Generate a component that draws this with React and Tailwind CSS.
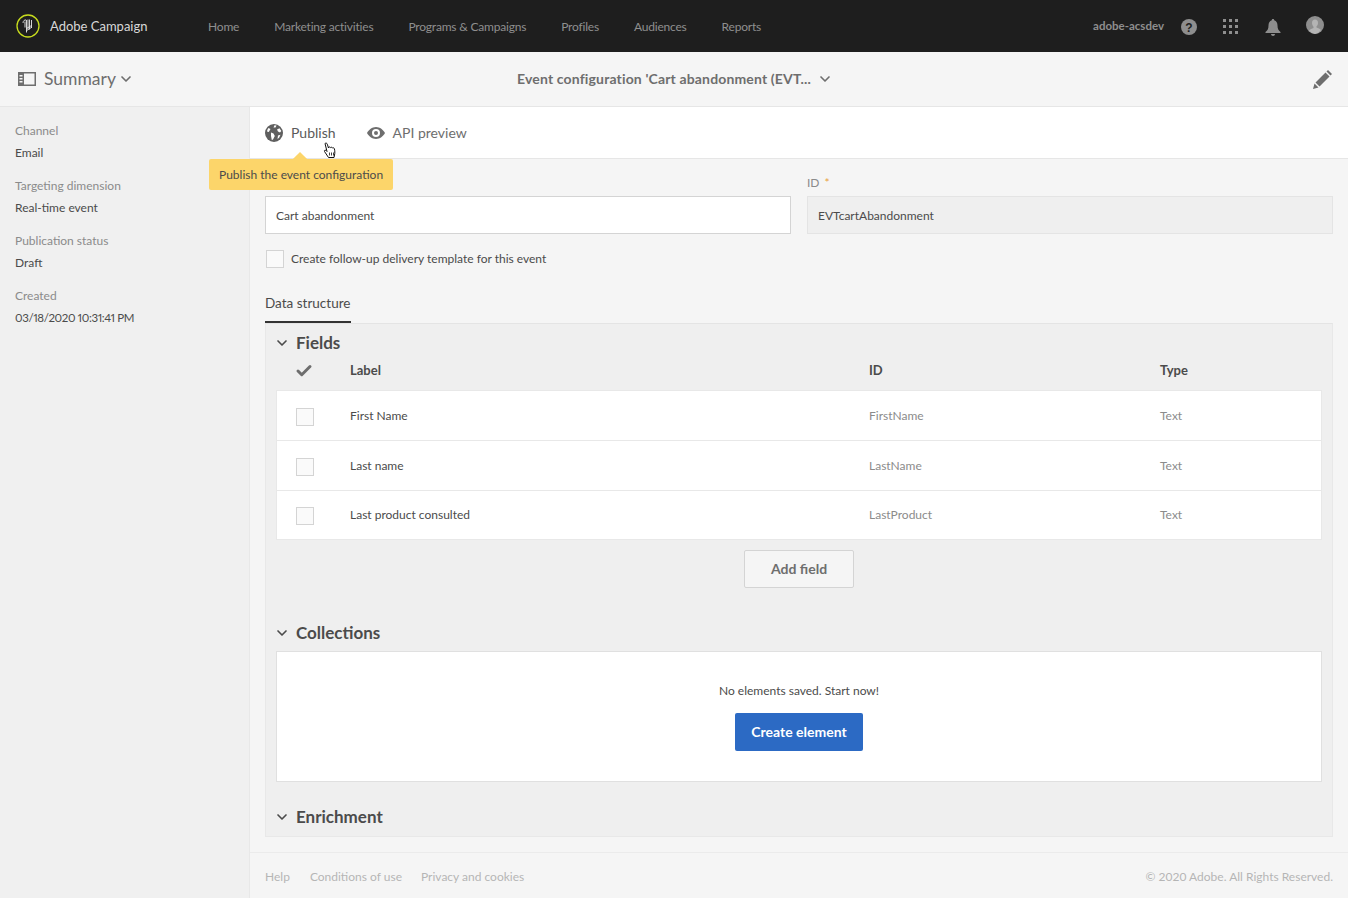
import React from "react";
import { ChevronDown, Check } from "lucide-react";

const font = "font-['Lato','Noto_Sans',sans-serif]";

const Logo = () => (
  <svg width="24" height="24" viewBox="0 0 24 24" fill="none">
    <circle cx="12" cy="12" r="11" stroke="#c8dc1e" strokeWidth="1.3" />
    <path d="M7 9c0-2 1.500-3.500 3.200-3M9 7.500v6M10.500 6v12.500M12 5.500v10M13.500 5.500v10M15.500 6v8M10 17l6-4M10.500 14.500l5-3" stroke="#e8e8e8" strokeWidth="0.9" />
  </svg>
);

const SummaryIcon = () => (
  <svg width="18" height="14" viewBox="0 0 18 14" className="text-[#6e6e6e]">
    <path fill="currentColor" d="M0 0h18v14H0zM6 1.500v11h10.500v-11zM1.500 3v1.500h3V3zM1.500 6v1.500h3V6zM1.500 9v1.500h3V9z" fillRule="evenodd" />
  </svg>
);

const Globe = () => (
  <svg width="18" height="18" viewBox="0 0 18 18">
    <circle cx="9" cy="9" r="9" fill="#5f5f5f" />
    <path fill="#fff" d="M9.500 1.200 11.500 1.500 10.500 3.500 8.500 3.500zM3.500 4 5.500 5 3.800 8 2 7.500C2.200 6 2.800 5 3.500 4zM6 8.500 8.500 9.500 9.800 12 8 15.500 6.800 16 6 12zM12 5.500l2.500-1.200 1.800 2.700-1.300 1.500-2-.9zM13 11.500l2.500-.7-1.400 3-1.600 1.200z" />
  </svg>
);

const Eye = () => (
  <svg width="18" height="12" viewBox="0 0 18 12">
    <path fill="#6e6e6e" fillRule="evenodd" d="M9 0c4 0 7.200 2.800 9 6-1.800 3.200-5 6-9 6S1.800 9.200 0 6c1.800-3.200 5-6 9-6zm0 2a4 4 0 1 0 0 8 4 4 0 0 0 0-8zm0 2a2 2 0 1 1 0 4 2 2 0 0 1 0-4z" />
  </svg>
);

const Pencil = () => (
  <svg width="19" height="19" viewBox="0 0 19 19">
    <path fill="#6e6e6e" d="M0 19l1.500-5.500L5.500 17.500zM2.500 12.500 12.500 2.500 16.500 6.500 6.500 16.500zM13.500 1.500 15 0l4 4-1.500 1.500z" />
  </svg>
);

const Cursor = () => (
  <svg width="16" height="18" viewBox="0 0 16 18">
    <path fill="#fff" stroke="#111" strokeWidth="1" strokeLinejoin="round" d="M3 1.500c1-.8 2-.3 2.300.7L6.500 6l.3-.7c.7-.6 1.400-.4 1.800.3.600-.6 1.500-.4 1.800.4.700-.5 1.700-.2 2 .7.500 2 .6 4.500.1 6.300l-.5 2.500H6.500L2.500 9.500c-.5-1 .5-1.800 1.500-1l1 1z" />
    <path stroke="#111" strokeWidth="0.8" d="M7.500 10.500v3M9.500 10.500v3M11.500 10.500v3" />
  </svg>
);

const HeaderIcons = () => (
  <div className="flex items-center">
    <svg width="16" height="16" viewBox="0 0 16 16" className="ml-[17px] mt-[2px]">
      <circle cx="8" cy="8" r="8" fill="#8e8e8e" />
      <text x="8" y="12.500" textAnchor="middle" fontSize="12" fontWeight="800" fill="#1e1e1e" fontFamily="Liberation Sans">?</text>
    </svg>
    <div className="ml-[26px] grid grid-cols-3 gap-[3px] w-[15px]">
      {[0, 1, 2, 3, 4, 5, 6, 7, 8].map((i) => (
        <span key={i} className="w-[3px] h-[3px] bg-[#8e8e8e]" />
      ))}
    </div>
    <svg width="16" height="17" viewBox="0 0 16 17" className="ml-[27px] mt-[2px]">
      <path fill="#8e8e8e" d="M8 0c.8 0 1.200.5 1.200 1.200C11.500 2 12.500 4 12.500 6.500c0 3.500 1 5 3 6.500v1H.5v-1c2-1.500 3-3 3-6.500C3.500 4 4.500 2 6.800 1.200 6.800.5 7.200 0 8 0zM6 15h4c0 1-1 2-2 2s-2-1-2-2z" />
    </svg>
    <svg width="18" height="18" viewBox="0 0 18 18" className="ml-[25px] -mt-[3px]">
      <circle cx="9" cy="9" r="9" fill="#8e8e8e" />
      <path fill="#b4b4b4" d="M9 3.500c2 0 3 1.500 3 3.500 0 1.500-.7 2.700-1.500 3.300v1.200c1.500.5 3.500 1.200 4.500 2.500A9 9 0 0 1 9 18a9 9 0 0 1-6-3.500c1-1.300 3-2 4.500-2.500v-1.200C6.700 9.700 6 8.500 6 7c0-2 1-3.500 3-3.500z" />
    </svg>
  </div>
);

const SideItem = ({ label, value, className = "text-[12px]" }) => (
  <div className="mb-[17px]">
    <div className="text-[12px] leading-[16px] text-[#8b8b8b]">{label}</div>
    <div className={`mt-[6px] leading-[16px] text-[#4b4b4b] proportional-nums ${className}`}>{value}</div>
  </div>
);

const Section = ({ title }) => (
  <div className="flex items-center h-[20px] pl-[8px]">
    <ChevronDown size={16} strokeWidth={2.500} className="text-[#4b4b4b]" />
    <span className="ml-[6px] text-[17px] font-bold text-[#4b4b4b]">{title}</span>
  </div>
);

const fields = [
  { label: "First Name", id: "FirstName", h: "h-[50px]" },
  { label: "Last name", id: "LastName", h: "h-[50px]" },
  { label: "Last product consulted", id: "LastProduct", h: "h-[48px]" },
];

export default function App() {
  return (
    <div className={`${font} w-[1348px] h-[898px] overflow-hidden flex flex-col bg-[#f5f5f5] text-[#4b4b4b] whitespace-nowrap`}>
      <header className="h-[52px] shrink-0 bg-[#1e1e1e] flex items-center pl-[16px] pr-[24px]">
        <Logo />
        <span className="ml-[10px] pt-[2px] text-[13px] text-[#d8d8d8] w-[158px]">Adobe Campaign</span>
        <nav className="flex gap-[35px] text-[12px] tracking-[-0.2px] text-[#8f8f8f] pt-[1px]">
          <a>Home</a>
          <a>Marketing activities</a>
          <a>Programs &amp; Campaigns</a>
          <a>Profiles</a>
          <a>Audiences</a>
          <a>Reports</a>
        </nav>
        <div className="ml-auto flex items-center">
          <span className="text-[11.5px] font-bold text-[#8e8e8e]">adobe-acsdev</span>
          <HeaderIcons />
        </div>
      </header>

      <div className="h-[55px] shrink-0 border-b border-[#e6e6e6] flex items-center pl-[18px] pr-[16px]">
        <div className="flex items-center w-[300px]">
          <SummaryIcon />
          <span className="ml-[8px] text-[17.5px] text-[#6e6e6e]">Summary</span>
          <ChevronDown size={16} strokeWidth={2.500} className="ml-[2px] text-[#6e6e6e]" />
        </div>
        <div className="flex-1 flex items-center justify-center pb-[1px]">
          <span className="text-[14px] font-bold tracking-[0.15px] text-[#6e6e6e]">Event configuration 'Cart abandonment (EVT...</span>
          <ChevronDown size={16} strokeWidth={2.500} className="ml-[6px] text-[#6e6e6e]" />
        </div>
        <div className="w-[300px] flex justify-end"><Pencil /></div>
      </div>

      <div className="flex flex-1 min-h-0">
        <aside className="w-[250px] shrink-0 bg-[#f0f0f0] border-r border-[#e8e8e8] pt-[16px] pl-[15px]">
          <SideItem label="Channel" value="Email" />
          <SideItem label="Targeting dimension" value="Real-time event" />
          <SideItem label="Publication status" value="Draft" />
          <SideItem label="Created" value="03/18/2020 10:31:41 PM" className="text-[11.5px] tracking-[-0.4px]" />
        </aside>

        <main className="flex-1 flex flex-col min-w-0">
          <div className="relative h-[52px] shrink-0 bg-white border-b border-[#e6e6e6] flex items-center pl-[15px]">
            <Globe />
            <span className="ml-[8px] text-[14px] text-[#5a5a5a]">Publish</span>
            <span className="ml-[31px]"><Eye /></span>
            <span className="ml-[8px] text-[14px] text-[#6e6e6e]">API preview</span>
            <span className="absolute left-[72px] top-[35px]"><Cursor /></span>
            {/* tooltip over the toolbar */}
            <div className="absolute left-[-41px] top-[52px] w-[184px] h-[31px] z-10 rounded-[2px] bg-[#fcd56a] flex items-center pl-[10px] text-[12px] text-[#4b4b4b]">
              <span className="absolute left-[86px] top-[-5px] w-[10px] h-[10px] rotate-45 bg-[#fcd56a]" />
              <span className="relative">Publish the event configuration</span>
            </div>
          </div>

          <div className="flex-1 px-[15px] flex flex-col">
            <div className="flex gap-[16px] pt-[16px]">
              <div className="flex-1 pt-[21px]">
                <div className="h-[38px] bg-white border border-[#d4d4d4] flex items-center pl-[10px] pt-[1px] text-[12px]">Cart abandonment</div>
              </div>
              <div className="flex-1">
                <div className="h-[16px] mb-[5px] text-[12px] leading-[16px] text-[#8b8b8b]">ID <span className="ml-[2px] text-[#e9a13b]">*</span></div>
                <div className="h-[38px] bg-[#efefef] border border-[#e4e4e4] flex items-center pl-[10px] pt-[1px] text-[12px]">EVTcartAbandonment</div>
              </div>
            </div>

            <div className="flex items-center mt-[16px] h-[18px]">
              <span className="ml-[1px] w-[18px] h-[18px] bg-[#fafafa] border border-[#d4d4d4]" />
              <span className="ml-[7px] text-[12px]">Create follow-up delivery template for this event</span>
            </div>

            <div className="mt-[25px] h-[30px] w-[86px] border-b-2 border-[#333] text-[13.5px] leading-[20px]">Data structure</div>

            <section className="h-[514px] bg-[#efefef] border border-[#e8e8e8] border-t-[#e4e4e4] pt-[9px]">
              <Section title="Fields" />
              <div className="h-[37px] flex items-center pb-[1px] text-[13px] font-bold pr-[10px] pl-[10px]">
                <span className="w-[74px] pl-[19px]"><Check size={18} strokeWidth={4} className="text-[#6e6e6e]" /></span>
                <span className="w-[519px]">Label</span>
                <span className="w-[291px]">ID</span>
                <span>Type</span>
              </div>
              <div className="mx-[10px] bg-white border border-[#e8e8e8]">
                {fields.map((f, i) => (
                  <div key={f.id} className={`${f.h} flex items-center text-[12px] ${i < 2 ? "border-b border-[#e8e8e8]" : ""}`}>
                    <span className="ml-[19px] mt-[2px] w-[18px] h-[18px] bg-[#fafafa] border border-[#d4d4d4]" />
                    <span className="ml-[36px] w-[519px]">{f.label}</span>
                    <span className="w-[291px] text-[#8b8b8b]">{f.id}</span>
                    <span className="text-[#8b8b8b]">Text</span>
                  </div>
                ))}
              </div>
              <div className="flex justify-center mt-[10px]">
                <button className="w-[110px] h-[38px] pb-[2px] bg-[#f5f5f5] border border-[#d4d4d4] rounded-[2px] text-[14px] font-bold text-[#6e6e6e]">Add field</button>
              </div>
              <div className="mt-[35px]"><Section title="Collections" /></div>
              <div className="mt-[8px] mx-[10px] h-[131px] bg-white border border-[#e0e0e0] flex flex-col items-center pt-[30px]">
                <span className="text-[12px] leading-[18px]">No elements saved. Start now!</span>
                <button className="mt-[13px] w-[128px] h-[38px] pb-[2px] bg-[#2c6ac4] rounded-[2px] text-[14px] font-bold text-white">Create element</button>
              </div>
              <div className="mt-[25px]"><Section title="Enrichment" /></div>
            </section>

            <footer className="mt-[15px] -mx-[15px] px-[15px] flex-1 border-t border-[#ebebeb] flex items-center text-[12px] text-[#b5b5b5] pt-[3px]">
              <a>Help</a>
              <a className="ml-[20px]">Conditions of use</a>
              <a className="ml-[19px]">Privacy and cookies</a>
              <span className="ml-auto">© 2020 Adobe. All Rights Reserved.</span>
            </footer>
          </div>
        </main>
      </div>
    </div>
  );
}
